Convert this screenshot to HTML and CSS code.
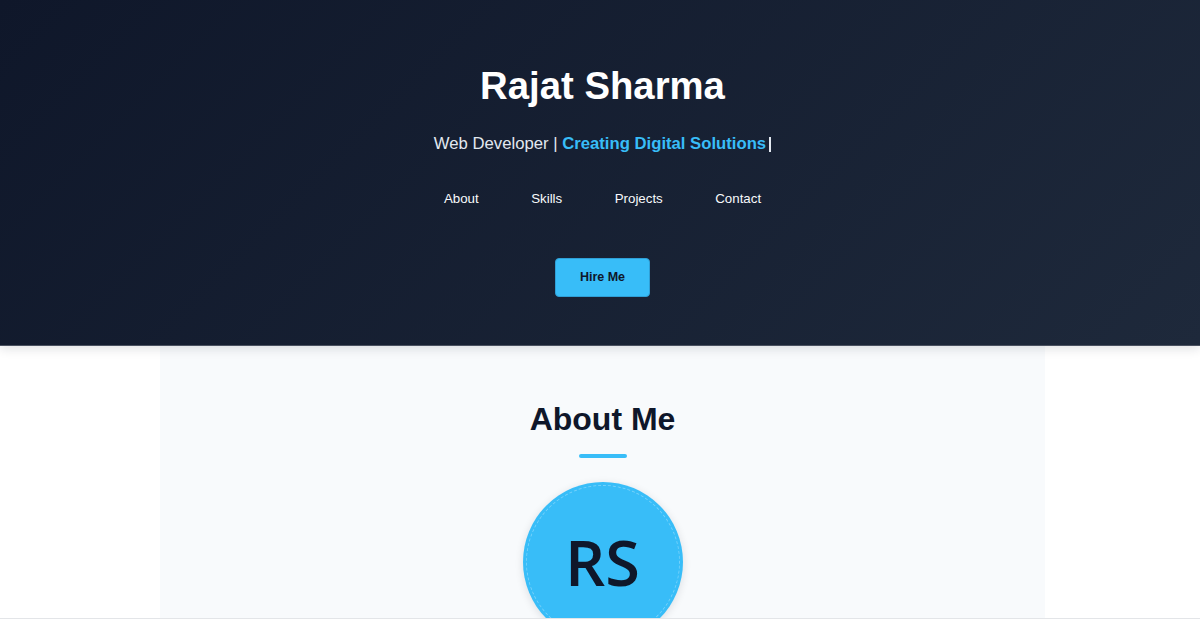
FILE: index.html
```html
<!DOCTYPE html>
<html lang="en">
<head>
<meta charset="utf-8">
<title>Rajat Sharma</title>
<link rel="stylesheet" href="styles.css">
</head>
<body>
<header class="hero">
  <h1 class="hero-title">Rajat Sharma</h1>
  <p class="hero-subtitle">Web Developer | <span class="typed">Creating Digital Solutions</span><span class="cursor"></span></p>
  <nav class="hero-nav">
    <a href="#about">About</a>
    <a href="#skills">Skills</a>
    <a href="#projects">Projects</a>
    <a href="#contact">Contact</a>
  </nav>
  <a class="hire-btn" href="#contact">Hire Me</a>
</header>
<main class="main">
  <section class="about" id="about">
    <h2 class="section-title">About Me</h2>
    <div class="title-bar"></div>
    <div class="avatar"><span>RS</span></div>
  </section>
</main>
<div class="bottom-edge"></div>
</body>
</html>
```
FILE: styles.css
```css
* { box-sizing: border-box; }
html, body { margin: 0; padding: 0; }
body {
  font-family: "Liberation Sans", Arial, sans-serif;
  background: #ffffff;
  color: #0f172a;
  overflow: hidden;
}
.hero {
  position: relative;
  z-index: 2;
  height: 346px;
  padding: 63px 0 0 5px;
  display: flex;
  flex-direction: column;
  align-items: center;
  background: linear-gradient(135deg, #0f172a 0%, #1e293b 100%);
  border-bottom: 1px solid #4a5160;
  box-shadow: 0 3px 10px rgba(15, 23, 42, 0.12);
}
.hero-title {
  margin: 0;
  font-size: 38.3px;
  line-height: 46px;
  font-weight: 700;
  color: #ffffff;
}
.hero-subtitle {
  margin: 22px 0 0;
  font-size: 16.7px;
  line-height: 25px;
  color: #e2e8f0;
}
.typed {
  font-weight: 700;
  color: #38bdf8;
}
.cursor {
  display: inline-block;
  width: 2px;
  height: 15px;
  margin-left: 3px;
  vertical-align: -3px;
  background: #e2e8f0;
}
.hero-nav {
  margin-top: 35px;
  display: flex;
  gap: 52.5px;
}
.hero-nav a {
  color: #f8fafc;
  text-decoration: none;
  font-size: 13.3px;
  line-height: 15px;
}
.hire-btn {
  margin-top: 52px;
  display: block;
  width: 95px;
  height: 39px;
  text-align: center;
  background: #38bdf8;
  color: #0f172a;
  font-weight: 700;
  font-size: 12.5px;
  text-decoration: none;
  border-radius: 4px;
  border: 1px solid #2f9fd6;
  line-height: 37px;
}
.main {
  padding-left: 5px;
  display: flex;
  justify-content: center;
}
.about {
  width: 885px;
  min-height: 400px;
  background: #f8fafc;
  padding-top: 54px;
  display: flex;
  flex-direction: column;
  align-items: center;
}
.section-title {
  margin: 0;
  font-size: 32px;
  line-height: 38px;
  font-weight: 700;
  color: #0f172a;
}
.title-bar {
  margin-top: 16px;
  width: 48px;
  height: 3.5px;
  border-radius: 2px;
  background: #38bdf8;
}
.avatar {
  position: relative;
  margin-top: 24px;
  width: 160px;
  height: 160px;
  border-radius: 50%;
  background: #38bdf8;
  box-shadow: 0 2px 8px rgba(15, 23, 42, 0.12);
  display: flex;
  align-items: center;
  justify-content: center;
}
.avatar::after {
  content: "";
  position: absolute;
  inset: 3px;
  border-radius: 50%;
  border: 1.5px dashed rgba(255, 255, 255, 0.3);
}
.avatar span {
  font-family: "Open Sans", "Noto Sans", sans-serif;
  font-size: 63px;
  font-weight: 600;
  color: #0f172a;
  line-height: 1;
}
.bottom-edge {
  position: fixed;
  left: 0;
  right: 0;
  bottom: 0;
  height: 5px;
  background: #ffffff;
  border-top: 1px solid #e3e5e8;
  z-index: 5;
}
```
